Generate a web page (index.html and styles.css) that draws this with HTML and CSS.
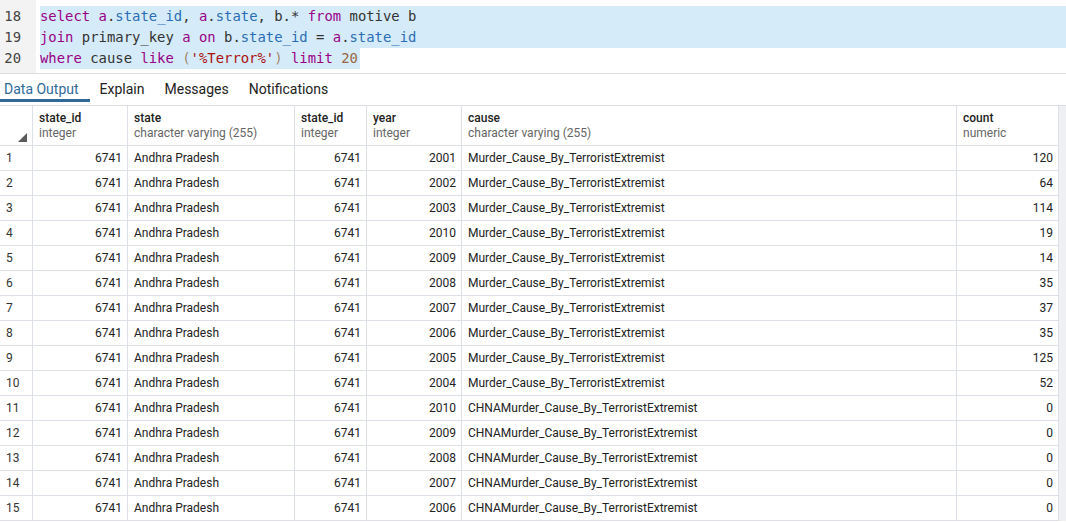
FILE: index.html
```html
<!DOCTYPE html>
<html>
<head>
<meta charset="utf-8">
<link rel="stylesheet" href="styles.css">
</head>
<body>
<div class="editor">
  <div class="gutter">
    <div class="ln">18</div>
    <div class="ln">19</div>
    <div class="ln">20</div>
  </div>
  <div class="code">
    <div class="line sel"><span class="kw">select</span> <span class="kw">a</span>.<span class="prop">state_id</span>, <span class="kw">a</span>.<span class="prop">state</span>, b.* <span class="kw">from</span> motive b</div>
    <div class="line sel"><span class="kw">join</span> primary_key <span class="kw">a</span> <span class="kw">on</span> b.<span class="prop">state_id</span> = <span class="kw">a</span>.<span class="prop">state_id</span></div>
    <div class="line"><span class="selpart"><span class="kw">where</span> cause <span class="kw">like</span> <span class="br">(</span><span class="str">'%Terror%'</span><span class="br">)</span> <span class="kw">limit</span> <span class="num">20</span></span></div>
  </div>
</div>
<div class="tabs">
  <div class="tab active">Data Output</div>
  <div class="tab">Explain</div>
  <div class="tab">Messages</div>
  <div class="tab">Notifications</div>
</div>
<div class="result">
  <div class="grid">
    <div class="hc corner"><span class="tri"></span></div>
    <div class="hc"><div class="hn">state_id</div><div class="ht">integer</div></div>
    <div class="hc"><div class="hn">state</div><div class="ht">character varying (255)</div></div>
    <div class="hc"><div class="hn">state_id</div><div class="ht">integer</div></div>
    <div class="hc"><div class="hn">year</div><div class="ht">integer</div></div>
    <div class="hc"><div class="hn">cause</div><div class="ht">character varying (255)</div></div>
    <div class="hc"><div class="hn">count</div><div class="ht">numeric</div></div>

    <div class="c rn">1</div><div class="c r">6741</div><div class="c">Andhra Pradesh</div><div class="c r">6741</div><div class="c r">2001</div><div class="c">Murder_Cause_By_TerroristExtremist</div><div class="c r">120</div>
    <div class="c rn">2</div><div class="c r">6741</div><div class="c">Andhra Pradesh</div><div class="c r">6741</div><div class="c r">2002</div><div class="c">Murder_Cause_By_TerroristExtremist</div><div class="c r">64</div>
    <div class="c rn">3</div><div class="c r">6741</div><div class="c">Andhra Pradesh</div><div class="c r">6741</div><div class="c r">2003</div><div class="c">Murder_Cause_By_TerroristExtremist</div><div class="c r">114</div>
    <div class="c rn">4</div><div class="c r">6741</div><div class="c">Andhra Pradesh</div><div class="c r">6741</div><div class="c r">2010</div><div class="c">Murder_Cause_By_TerroristExtremist</div><div class="c r">19</div>
    <div class="c rn">5</div><div class="c r">6741</div><div class="c">Andhra Pradesh</div><div class="c r">6741</div><div class="c r">2009</div><div class="c">Murder_Cause_By_TerroristExtremist</div><div class="c r">14</div>
    <div class="c rn">6</div><div class="c r">6741</div><div class="c">Andhra Pradesh</div><div class="c r">6741</div><div class="c r">2008</div><div class="c">Murder_Cause_By_TerroristExtremist</div><div class="c r">35</div>
    <div class="c rn">7</div><div class="c r">6741</div><div class="c">Andhra Pradesh</div><div class="c r">6741</div><div class="c r">2007</div><div class="c">Murder_Cause_By_TerroristExtremist</div><div class="c r">37</div>
    <div class="c rn">8</div><div class="c r">6741</div><div class="c">Andhra Pradesh</div><div class="c r">6741</div><div class="c r">2006</div><div class="c">Murder_Cause_By_TerroristExtremist</div><div class="c r">35</div>
    <div class="c rn">9</div><div class="c r">6741</div><div class="c">Andhra Pradesh</div><div class="c r">6741</div><div class="c r">2005</div><div class="c">Murder_Cause_By_TerroristExtremist</div><div class="c r">125</div>
    <div class="c rn">10</div><div class="c r">6741</div><div class="c">Andhra Pradesh</div><div class="c r">6741</div><div class="c r">2004</div><div class="c">Murder_Cause_By_TerroristExtremist</div><div class="c r">52</div>
    <div class="c rn">11</div><div class="c r">6741</div><div class="c">Andhra Pradesh</div><div class="c r">6741</div><div class="c r">2010</div><div class="c">CHNAMurder_Cause_By_TerroristExtremist</div><div class="c r">0</div>
    <div class="c rn">12</div><div class="c r">6741</div><div class="c">Andhra Pradesh</div><div class="c r">6741</div><div class="c r">2009</div><div class="c">CHNAMurder_Cause_By_TerroristExtremist</div><div class="c r">0</div>
    <div class="c rn">13</div><div class="c r">6741</div><div class="c">Andhra Pradesh</div><div class="c r">6741</div><div class="c r">2008</div><div class="c">CHNAMurder_Cause_By_TerroristExtremist</div><div class="c r">0</div>
    <div class="c rn">14</div><div class="c r">6741</div><div class="c">Andhra Pradesh</div><div class="c r">6741</div><div class="c r">2007</div><div class="c">CHNAMurder_Cause_By_TerroristExtremist</div><div class="c r">0</div>
    <div class="c rn">15</div><div class="c r">6741</div><div class="c">Andhra Pradesh</div><div class="c r">6741</div><div class="c r">2006</div><div class="c">CHNAMurder_Cause_By_TerroristExtremist</div><div class="c r">0</div>
  </div>
  <div class="strip"></div>
</div>
</body>
</html>
```
FILE: styles.css
```css
html, body {
  margin: 0;
  padding: 0;
  background: #ffffff;
  font-family: Roboto, "Liberation Sans", sans-serif;
  overflow: hidden;
}
.editor {
  display: flex;
  height: 73px;
  border-bottom: 1px solid #dcdde0;
  font-family: "DejaVu Sans Mono", "Liberation Mono", monospace;
  font-size: 13.9px;
  color: #333333;
}
.gutter {
  width: 36px;
  background: #f3f3f3;
  padding-top: 6px;
  box-sizing: border-box;
}
.ln {
  height: 21px;
  line-height: 21px;
  text-align: right;
  padding-right: 15px;
  color: #444444;
}
.code {
  flex: 1;
  margin-left: 4px;
  padding-top: 6px;
}
.line {
  height: 21px;
  line-height: 21px;
  white-space: pre;
}
.line.sel { background: #d6ebf9; }
.selpart {
  display: inline-block;
  height: 21px;
  background: #d6ebf9;
  padding-right: 2px;
}
.kw { color: #990088; }
.prop { color: #2a6db5; }
.br { color: #a08a6a; }
.str { color: #aa1111; }
.num { color: #996644; }
.tabs {
  display: flex;
  height: 31px;
  border-bottom: 1px solid #dcdde0;
  margin-left: -6px;
  font-size: 14px;
  color: #222222;
}
.tab {
  padding: 0 10px;
  line-height: 30px;
  box-sizing: border-box;
  height: 28px;
}
.tab.active {
  color: #2f6a99;
  border-bottom: 3px solid #2f6a99;
  padding-right: 11px;
}
.result {
  display: flex;
  align-items: stretch;
}
.grid {
  display: grid;
  grid-template-columns: 33px 95px 167px 72px 95px 495px 102px;
  grid-auto-rows: 25px;
  grid-template-rows: 40px;
  align-content: start;
  font-size: 12px;
  color: #222222;
}
.hc {
  height: 40px;
  box-sizing: border-box;
  border-right: 1px solid #dde0e6;
  border-bottom: 1px solid #dde0e6;
  padding: 5px 6px 0;
  line-height: 15px;
}
.corner {
  position: relative;
}
.tri {
  position: absolute;
  left: 18px;
  top: 27px;
  width: 0;
  height: 0;
  border-left: 9px solid transparent;
  border-bottom: 9px solid #5b5b5b;
}
.hn {
  font-weight: 500;
  color: #222222;
}
.ht {
  color: #666666;
}
.c {
  height: 25px;
  line-height: 24px;
  box-sizing: border-box;
  border-right: 1px solid #dde0e6;
  border-bottom: 1px solid #dde0e6;
  padding: 0 6px;
  white-space: nowrap;
  overflow: hidden;
}
.c.r { text-align: right; padding-right: 5px; }
.c.rn { padding-left: 6px; color: #333333; }
.strip {
  flex: 1;
  background: #eef0f3;
}
```
